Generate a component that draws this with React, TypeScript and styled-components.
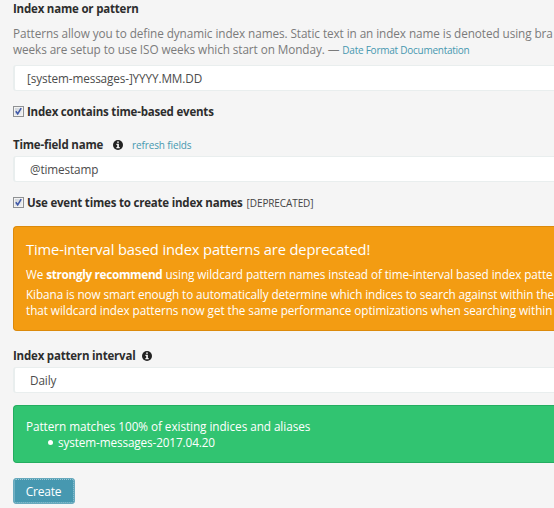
import React from "react";
import styled, { createGlobalStyle } from "styled-components";

const GlobalStyle = createGlobalStyle`
  * { box-sizing: border-box; }
  body {
    margin: 0;
    background: #f5f5f5;
    color: #2d2d2d;
    font: 11.75px/16px "Open Sans", "Noto Sans", sans-serif;
    letter-spacing: -0.12px;
    overflow: hidden;
  }
`;

const Form = styled.form`
  display: flex;
  flex-direction: column;
  height: 508px;
  padding-left: 13px;
  white-space: nowrap;
`;

const LabelRow = styled.div<{ $top: number }>`
  display: flex;
  align-items: center;
  height: 16px;
  margin-top: ${(p) => p.$top}px;
`;

const Label = styled.label`
  font-size: 11.5px;
  font-weight: 700;
  letter-spacing: -0.2px;
`;

const Help = styled.p`
  margin: 8px 0 0;
  color: #7b7b7b;
  letter-spacing: -0.08px;
`;

const HelpLine = styled.span`
  display: block;
  height: 16px;
`;

const Link = styled.a<{ $left?: number; $spacing?: number }>`
  margin-left: ${(p) => p.$left ?? 0}px;
  color: #4798b0;
  font-size: 10px;
  line-height: 1;
  letter-spacing: ${(p) => p.$spacing ?? -0.13}px;
  text-decoration: none;
`;

const Field = styled.div<{ $top: number; $pad: number; $raise?: number }>`
  display: flex;
  align-items: center;
  flex: none;
  height: 26px;
  margin-top: ${(p) => p.$top}px;
  padding: 0 0 ${(p) => p.$raise ?? 0}px ${(p) => p.$pad}px;
  border: 1px solid #e9eeee;
  border-width: 1px 0 1px 2px;
  border-radius: 3px 0 0 3px;
  background: #fff;
  color: #4c4c4c;
`;

const CheckBox = styled.span`
  display: flex;
  flex: none;
  width: 11px;
  height: 11px;
  margin: -2px 3px 0 0;
  border: 1px solid #8f9193;
  background: linear-gradient(135deg, #cbd0d6, #f4f5f7);
  box-shadow: inset 0 0 0 1px #f3f3f3;

  svg { width: 9px; height: 9px; }
`;

const InfoIcon = styled.svg<{ $left: number }>`
  flex: none;
  width: 10px;
  height: 10px;
  margin-left: ${(p) => p.$left}px;
`;

const Tag = styled.span`
  margin-left: 4px;
  font-size: 10px;
  letter-spacing: -0.1px;
  color: #444;
`;

const Notice = styled.section<{ $kind: "warning" | "success" }>`
  flex: none;
  height: ${(p) => (p.$kind === "warning" ? 105 : 58)}px;
  margin-top: ${(p) => (p.$kind === "warning" ? 15 : 12)}px;
  padding: 12px 0 0 12px;
  border: 1px solid ${(p) => (p.$kind === "warning" ? "#dc8a0b" : "#24ad60")};
  border-right: 0;
  border-radius: 4px 0 0 4px;
  background: ${(p) => (p.$kind === "warning" ? "#f39c12" : "#31c471")};
  color: #fff;
`;

const NoticeTitle = styled.h4`
  margin: 0;
  font-size: 14.7px;
  font-weight: 400;
  line-height: 20px;
  letter-spacing: -0.12px;
`;

const NoticeLine = styled.p<{ $top?: number; $spacing?: number }>`
  margin: ${(p) => p.$top ?? 0}px 0 0;
  letter-spacing: ${(p) => p.$spacing ?? -0.12}px;

  strong { letter-spacing: -0.32px; }
`;

const Matches = styled.ul`
  margin: 0;
  padding: 0 0 0 22px;
  list-style: none;

  li { display: flex; align-items: center; }
  li::before {
    content: "";
    width: 5px;
    height: 5px;
    margin-right: 5px;
    border-radius: 50%;
    background: #fff;
  }
`;

const CreateButton = styled.button`
  flex: none;
  width: 62px;
  height: 26px;
  margin-top: 15px;
  padding: 2px 1px 0 0;
  border: 1px solid #67a9bd;
  outline: 1px dotted #9bc8d6;
  outline-offset: -2px;
  border-radius: 3px;
  background: #4798b0;
  color: #fff;
  font: 12px/16px "Open Sans", "Noto Sans", sans-serif;
  letter-spacing: -0.2px;
`;

const Checked = () => (
  <CheckBox role="checkbox" aria-checked="true">
    <svg viewBox="0 0 9 9">
      <path d="M1.8 4.2 3.7 6.8 7.2 1.2" fill="none" stroke="#3f58a8" strokeWidth="1.6" />
    </svg>
  </CheckBox>
);

const Info = ({ left }: { left: number }) => (
  <InfoIcon $left={left} viewBox="0 0 10 10">
    <circle cx="5" cy="5" r="5" fill="#222" />
    <path d="M4.1 1.4h1.8v1.4H4.1zM3.4 3.8h2.5v3.3h.8v1.2H3.4V7.1h.8V5h-.8z" fill="#f5f5f5" />
  </InfoIcon>
);

export default function App() {
  return (
    <>
      <GlobalStyle />
      <Form>
        <LabelRow $top={1}>
          <Label>Index name or pattern</Label>
        </LabelRow>
        <Help>
          <HelpLine>
            Patterns allow you to define dynamic index names. Static text in an index name is denoted using bra
          </HelpLine>
          <HelpLine>
            weeks are setup to use ISO weeks which start on Monday. — <Link $spacing={-0.25}>Date Format Documentation</Link>
          </HelpLine>
        </Help>
        <Field $top={8} $pad={12} $raise={1}>[system-messages-]YYYY.MM.DD</Field>
        <LabelRow $top={13}>
          <Checked />
          <Label>Index contains time-based events</Label>
        </LabelRow>
        <LabelRow $top={17}>
          <Label>Time-field name</Label>
          <Info left={10} />
          <Link $left={9}>refresh fields</Link>
        </LabelRow>
        <Field $top={3} $pad={15}>@timestamp</Field>
        <LabelRow $top={13}>
          <Checked />
          <Label>Use event times to create index names</Label>
          <Tag>[DEPRECATED]</Tag>
        </LabelRow>
        <Notice $kind="warning">
          <NoticeTitle>Time-interval based index patterns are deprecated!</NoticeTitle>
          <NoticeLine $top={7} $spacing={-0.09}>
            We <strong>strongly recommend</strong> using wildcard pattern names instead of time-interval based index patte
          </NoticeLine>
          <NoticeLine $top={4} $spacing={-0.09}>
            Kibana is now smart enough to automatically determine which indices to search against within the
          </NoticeLine>
          <NoticeLine $spacing={-0.06}>
            that wildcard index patterns now get the same performance optimizations when searching within
          </NoticeLine>
        </Notice>
        <LabelRow $top={17}>
          <Label>Index pattern interval</Label>
          <Info left={6} />
        </LabelRow>
        <Field $top={3} $pad={15}>Daily</Field>
        <Notice $kind="success">
          <NoticeLine $spacing={-0.06}>Pattern matches 100% of existing indices and aliases</NoticeLine>
          <Matches>
            <li>system-messages-2017.04.20</li>
          </Matches>
        </Notice>
        <CreateButton type="button">Create</CreateButton>
      </Form>
    </>
  );
}
